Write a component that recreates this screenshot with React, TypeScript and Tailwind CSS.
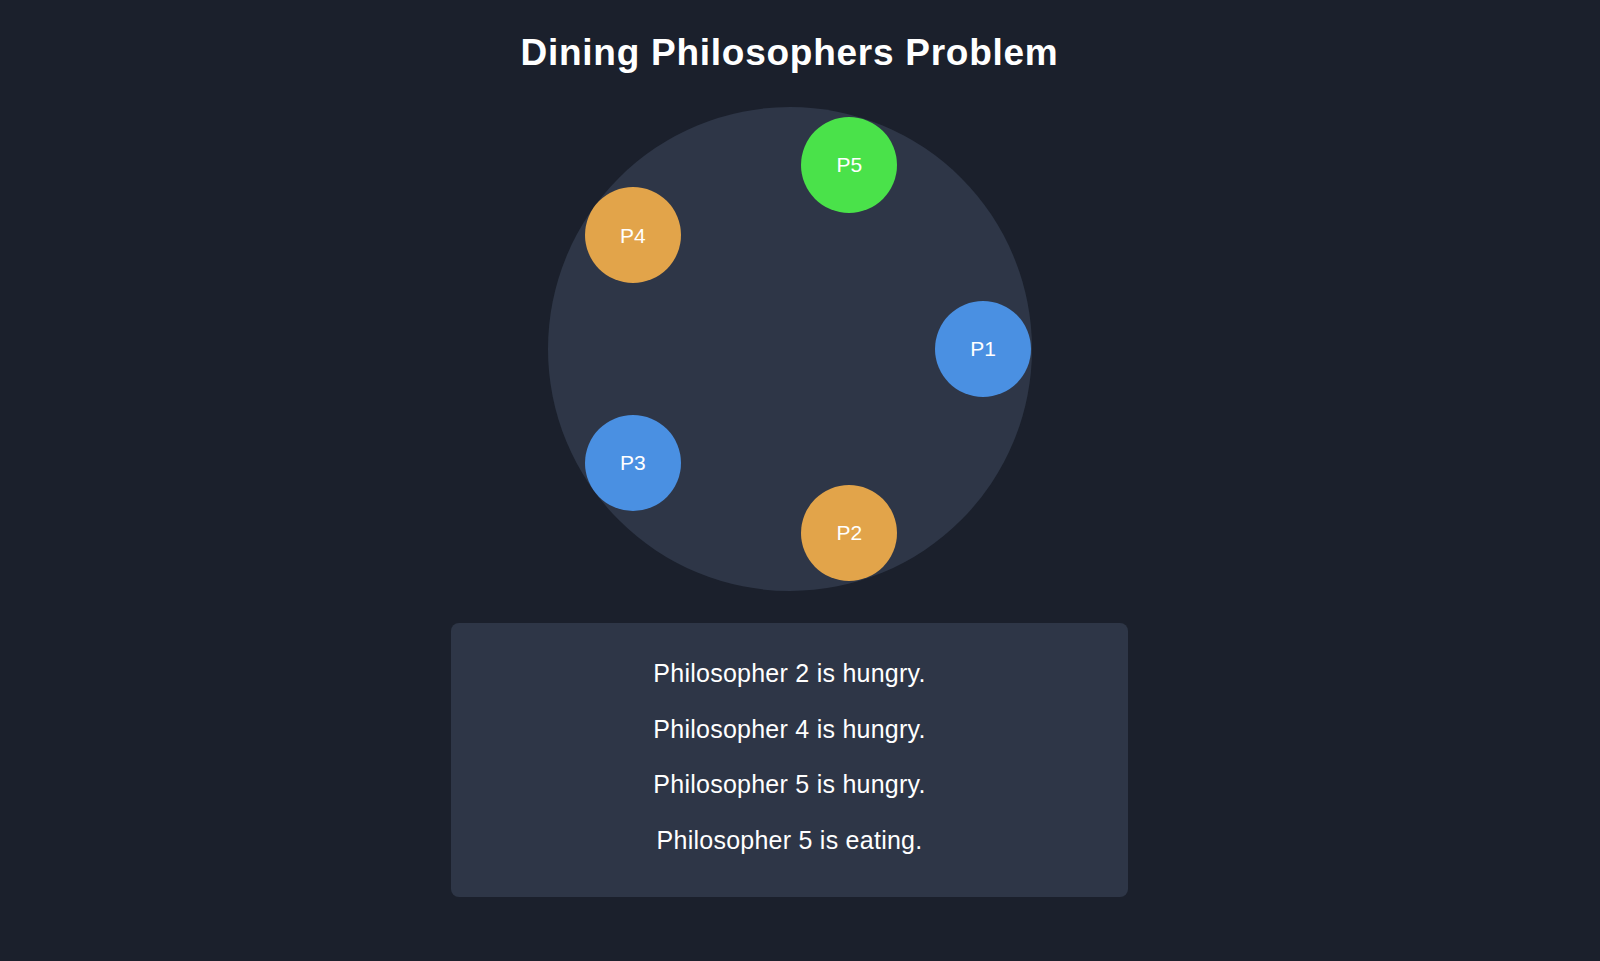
const philosophers = [
  { id: 1, state: "thinking" },
  { id: 2, state: "hungry" },
  { id: 3, state: "thinking" },
  { id: 4, state: "hungry" },
  { id: 5, state: "eating" },
];

const stateColor: Record<string, string> = {
  thinking: "bg-[#4a90e2]",
  hungry: "bg-[#e2a44a]",
  eating: "bg-[#4ae24a]",
};

const logs = [
  "Philosopher 2 is hungry.",
  "Philosopher 4 is hungry.",
  "Philosopher 5 is hungry.",
  "Philosopher 5 is eating.",
];

const TABLE = 484;
const SEAT = 96;
const RADIUS = 193.5;

export default function App() {
  return (
    <div className="min-h-screen bg-[#1b202c] text-white font-['Liberation_Sans',Arial,sans-serif]">
      <div className="w-[1579px] flex flex-col items-center pt-[33px] pb-[64px]">
        <h1 className="text-[37px] leading-[40px] font-bold tracking-[0.02em]">
          Dining Philosophers Problem
        </h1>

        <div className="relative mt-[34px] w-[484px] h-[484px] rounded-full bg-[#2e3647]">
          {philosophers.map((p, i) => {
            const angle = (i * 2 * Math.PI) / philosophers.length;
            const x = TABLE / 2 + RADIUS * Math.cos(angle) - SEAT / 2;
            const y = TABLE / 2 + RADIUS * Math.sin(angle) - SEAT / 2;
            return (
              <div
                key={p.id}
                className={`absolute w-[96px] h-[96px] rounded-full flex items-center justify-center text-[21px] ${stateColor[p.state]}`}
                style={{ left: x, top: y }}
              >
                P{p.id}
              </div>
            );
          })}
        </div>

        <div className="mt-[32px] w-[677px] rounded-lg bg-[#2e3647] pt-[36px] pb-[43px] flex flex-col items-center gap-[27.5px]">
          {logs.map((line, i) => (
            <p key={i} className="text-[25px] leading-[28px] tracking-[0.01em]">
              {line}
            </p>
          ))}
        </div>
      </div>
    </div>
  );
}
